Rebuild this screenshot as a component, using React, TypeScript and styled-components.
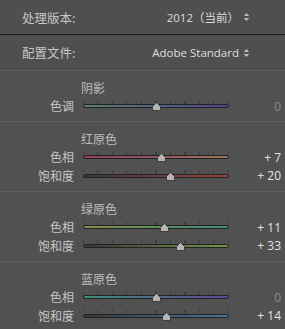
import styled, { createGlobalStyle } from "styled-components";

type SliderSpec = {
  label: string;
  value: number;
  from: string;
  to: string;
};

type SectionSpec = {
  title: string;
  sliders: SliderSpec[];
};

const sections: SectionSpec[] = [
  {
    title: "阴影",
    sliders: [{ label: "色调", value: 0, from: "#56806f", to: "#4f468c" }],
  },
  {
    title: "红原色",
    sliders: [
      { label: "色相", value: 7, from: "#8e3d62", to: "#9a725c" },
      { label: "饱和度", value: 20, from: "#383838", to: "#9a4444" },
    ],
  },
  {
    title: "绿原色",
    sliders: [
      { label: "色相", value: 11, from: "#85904a", to: "#3e8c78" },
      { label: "饱和度", value: 33, from: "#383838", to: "#76944a" },
    ],
  },
  {
    title: "蓝原色",
    sliders: [
      { label: "色相", value: 0, from: "#3e8c7a", to: "#5e4894" },
      { label: "饱和度", value: 14, from: "#383838", to: "#4a7498" },
    ],
  },
];

function formatValue(v: number) {
  if (v === 0) return "0";
  return v > 0 ? `+ ${v}` : `- ${Math.abs(v)}`;
}

function Stepper() {
  return (
    <svg width="7" height="10" viewBox="0 0 7 10">
      <path d="M3.5 1 L6.2 4 H0.8 Z" fill="#bdbdbd" />
      <path d="M3.5 9 L6.2 6 H0.8 Z" fill="#bdbdbd" />
    </svg>
  );
}

function Thumb() {
  return (
    <svg width="9" height="9" viewBox="0 0 9 9">
      <path d="M4.5 0.5 L8.5 4.5 V8.5 H0.5 V4.5 Z" fill="#b4b4b4" stroke="#2e2e2e" strokeWidth="0.8" />
    </svg>
  );
}

function Slider({ spec }: { spec: SliderSpec }) {
  const pct = 50 + spec.value / 2;
  return (
    <SliderRow>
      <RowLabel>{spec.label}</RowLabel>
      <TrackArea>
        <Ticks />
        <Track $from={spec.from} $to={spec.to} />
        <ThumbWrap style={{ left: `${pct}%` }}>
          <Thumb />
        </ThumbWrap>
      </TrackArea>
      <Value $zero={spec.value === 0}>{formatValue(spec.value)}</Value>
    </SliderRow>
  );
}

export default function App() {
  return (
    <>
      <GlobalStyle />
      <Panel>
        <TopRow $h={34}>
          <TopLabel>处理版本:</TopLabel>
          <Picker>
            2012（当前）
            <Stepper />
          </Picker>
        </TopRow>
        <DarkRule />
        <TopRow $h={35}>
          <TopLabel>配置文件:</TopLabel>
          <Picker>
            Adobe Standard
            <Stepper />
          </Picker>
        </TopRow>
        {sections.map((s, i) => (
          <Section key={s.title} $first={i === 0}>
            <SectionTitle>{s.title}</SectionTitle>
            {s.sliders.map((sl) => (
              <Slider key={sl.label} spec={sl} />
            ))}
          </Section>
        ))}
      </Panel>
    </>
  );
}

const GlobalStyle = createGlobalStyle`
  html, body {
    margin: 0;
    background: #515151;
  }
  body {
    font-family: "Noto Sans CJK SC", "Noto Sans", sans-serif;
  }
`;

const Panel = styled.div`
  width: 285px;
  height: 329px;
  overflow: hidden;
  background: #515151;
  display: flex;
  flex-direction: column;
`;

const TopRow = styled.div<{ $h: number }>`
  height: ${(p) => p.$h}px;
  display: flex;
  align-items: center;
  justify-content: space-between;
  padding: 0 35px 0 22px;
  background: #4f4f4f;
  flex-shrink: 0;
`;

const TopLabel = styled.span`
  font-size: 12.5px;
  color: #c6c6c6;
`;

const Picker = styled.span`
  display: flex;
  align-items: center;
  gap: 4px;
  font-family: "Open Sans", "Noto Sans CJK SC", sans-serif;
  font-size: 11.5px;
  color: #dedede;
`;

const DarkRule = styled.div`
  height: 1px;
  background: #161616;
  flex-shrink: 0;
`;

const Section = styled.div<{ $first: boolean }>`
  border-top: 1px solid #5e5e5e;
  padding: 7px 0 ${(p) => (p.$first ? 5.5 : 6)}px;
  flex-shrink: 0;
`;

const SectionTitle = styled.div`
  height: 19px;
  line-height: 19px;
  padding-left: 81px;
  font-size: 12px;
  color: #bdbdbd;
`;

const SliderRow = styled.div`
  height: 18.5px;
  display: grid;
  grid-template-columns: 74px 146px 43px;
  column-gap: 9px;
  align-items: center;
`;

const RowLabel = styled.span`
  text-align: right;
  font-size: 12px;
  line-height: 18px;
  color: #c6c6c6;
`;

const TrackArea = styled.div`
  position: relative;
  height: 18.5px;
`;

const Ticks = styled.div`
  position: absolute;
  left: 0;
  right: 0;
  top: 3.5px;
  height: 3px;
  background: repeating-linear-gradient(
    to right,
    #3c3c3c 0,
    #3c3c3c 1px,
    transparent 1px,
    transparent 14.5px
  );
`;

const Track = styled.div<{ $from: string; $to: string }>`
  position: absolute;
  left: 0;
  right: 0;
  top: 7.25px;
  height: 2px;
  border: 1px solid #222;
  border-radius: 2px;
  background: linear-gradient(to right, ${(p) => p.$from}, ${(p) => p.$to});
`;

const ThumbWrap = styled.div`
  position: absolute;
  top: 5px;
  width: 9px;
  height: 9px;
  margin-left: -4.5px;
  display: flex;
`;

const Value = styled.span<{ $zero: boolean }>`
  text-align: right;
  font-family: "Open Sans", sans-serif;
  font-size: 12px;
  color: ${(p) => (p.$zero ? "#8a8a8a" : "#e2e2e2")};
`;
